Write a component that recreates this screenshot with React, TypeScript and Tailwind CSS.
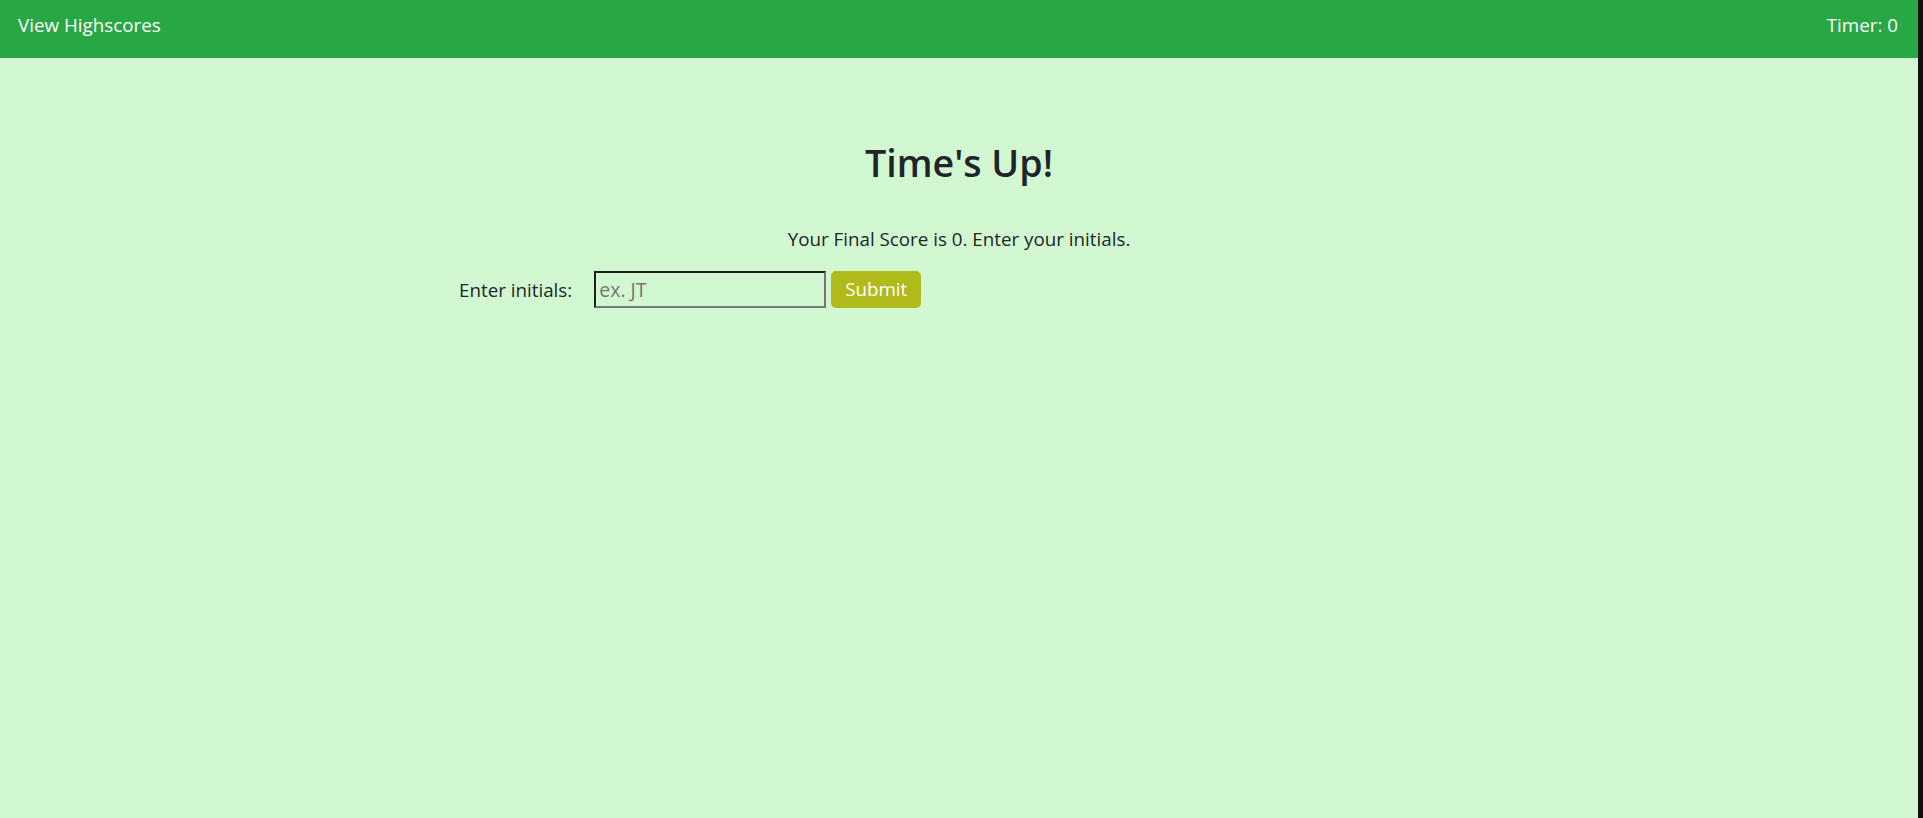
// App.tsx

import { useState } from "react";

export default function App() {
  const [initials, setInitials] = useState("");

  return (
    <div className="flex h-[818px] w-full bg-[#111111] font-['Open_Sans',sans-serif] text-[18.8px] text-[#212529]">
      <div className="flex w-[1918px] flex-col bg-[#d2f8d2]">
        <header className="flex h-[58px] items-center justify-between bg-[#28a745] px-[18px] pb-[8px] text-white">
          <a href="#" className="leading-[30px]">
            View Highscores
          </a>
          <span className="pr-[2px] leading-[30px]">Timer: 0</span>
        </header>

        <main className="mx-auto w-[1000px] pt-[81px]">
          <h2 className="text-center text-[37.6px] font-semibold leading-[48px]">
            Time's Up!
          </h2>
          <p className="mt-[37px] text-center leading-[30px]">
            Your Final Score is 0. Enter your initials.
          </p>
          <form
            className="mt-[17px] flex items-center"
            onSubmit={(e) => e.preventDefault()}
          >
            <label htmlFor="initials" className="mr-[22px] leading-[30px]">
              Enter initials:
            </label>
            <input
              id="initials"
              value={initials}
              onChange={(e) => setInitials(e.target.value)}
              placeholder="ex. JT"
              className="h-[37px] w-[232px] border-2 border-t-[#1f1f1f] border-l-[#1f1f1f] border-r-[#767676] border-b-[#767676] bg-transparent px-[3px] text-[19.5px] placeholder:text-[#757575] focus:outline-none"
            />
            <button
              type="submit"
              className="ml-[5px] h-[37px] w-[90px] rounded-[5px] bg-[#b1ba1b] text-white"
            >
              Submit
            </button>
          </form>
        </main>
      </div>
    </div>
  );
}
